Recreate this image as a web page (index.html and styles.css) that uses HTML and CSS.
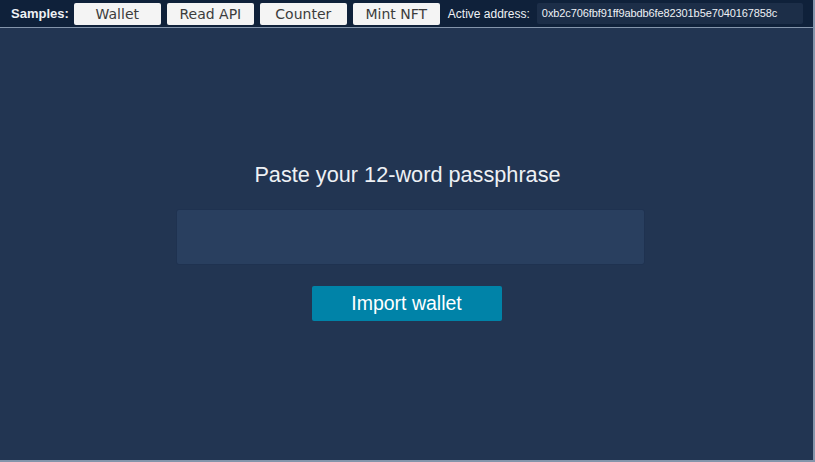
FILE: index.html
```html
<!DOCTYPE html>
<html lang="en">
<head>
    <meta charset="UTF-8">
    <meta name="viewport" content="width=device-width, initial-scale=1.0">
    <title>Wallet Sample</title>
    <link rel="stylesheet" href="styles.css">
</head>
<body>

<div class="app">
    <div class="toolbar">
        <span class="toolbar-label">Samples:</span>
        <button class="sample-btn">Wallet</button>
        <button class="sample-btn">Read API</button>
        <button class="sample-btn">Counter</button>
        <button class="sample-btn">Mint NFT</button>
        <span class="address-label">Active address:</span>
        <div class="address-box">0xb2c706fbf91ff9abdb6fe82301b5e7040167858c</div>
    </div>

    <div class="content">
        <div class="import-title">Paste your 12-word passphrase</div>
        <textarea class="phrase-input"></textarea>
        <button class="import-btn">Import wallet</button>
    </div>
</div>

</body>
</html>
```

FILE: styles.css
```css
:root {
    --bar-bg: #0f213a;
    --main-bg: #223552;
    --edge: #8495ab;
    --input-bg: #293f5f;
    --accent: #0083a8;
    --fg: #eef1f5;
}
html, body {
    margin: 0;
    height: 100%;
}
body {
    background-color: var(--main-bg);
    color: var(--fg);
    font-family: 'Liberation Sans', Arial, sans-serif;
}
.app {
    height: 460px;
    width: 813px;
    display: flex;
    flex-direction: column;
    border-right: 2px solid var(--edge);
    border-bottom: 2px solid var(--edge);
}
.toolbar {
    height: 28px;
    box-sizing: border-box;
    background-color: var(--bar-bg);
    border-bottom: 1px solid var(--edge);
    display: flex;
    align-items: center;
    padding: 0 10px 0 11px;
    font-size: 13px;
}
.toolbar-label {
    font-weight: bold;
    margin-right: 5px;
}
.sample-btn {
    width: 87px;
    height: 22px;
    margin-right: 6px;
    border: none;
    border-radius: 2px;
    background-color: #f4f4f4;
    color: #3c3c3c;
    font-family: 'DejaVu Sans', sans-serif;
    font-size: 14px;
    padding: 0;
}
.address-label {
    font-size: 12px;
    margin-left: 2px;
    margin-right: 7px;
}
.address-box {
    flex: 1;
    height: 21px;
    line-height: 21px;
    background-color: #1c2e48;
    border-radius: 2px;
    padding-left: 5px;
    font-size: 11px;
    letter-spacing: -0.1px;
}
.content {
    flex: 1;
    display: flex;
    flex-direction: column;
    align-items: center;
    padding-top: 134px;
}
.import-title {
    font-size: 21.7px;
    margin-bottom: 21px;
    margin-left: 2px;
}
.phrase-input {
    width: 469px;
    height: 56px;
    box-sizing: border-box;
    background-color: var(--input-bg);
    border: 1px solid #1f3250;
    border-radius: 3px;
    resize: none;
    outline: none;
    color: var(--fg);
    margin: 0 0 21px 8px;
}
.import-btn {
    width: 190px;
    height: 35px;
    border: none;
    border-radius: 2px;
    background-color: var(--accent);
    color: #ffffff;
    font-family: 'Liberation Sans', Arial, sans-serif;
    font-size: 19.5px;
    padding: 0;
}
```
